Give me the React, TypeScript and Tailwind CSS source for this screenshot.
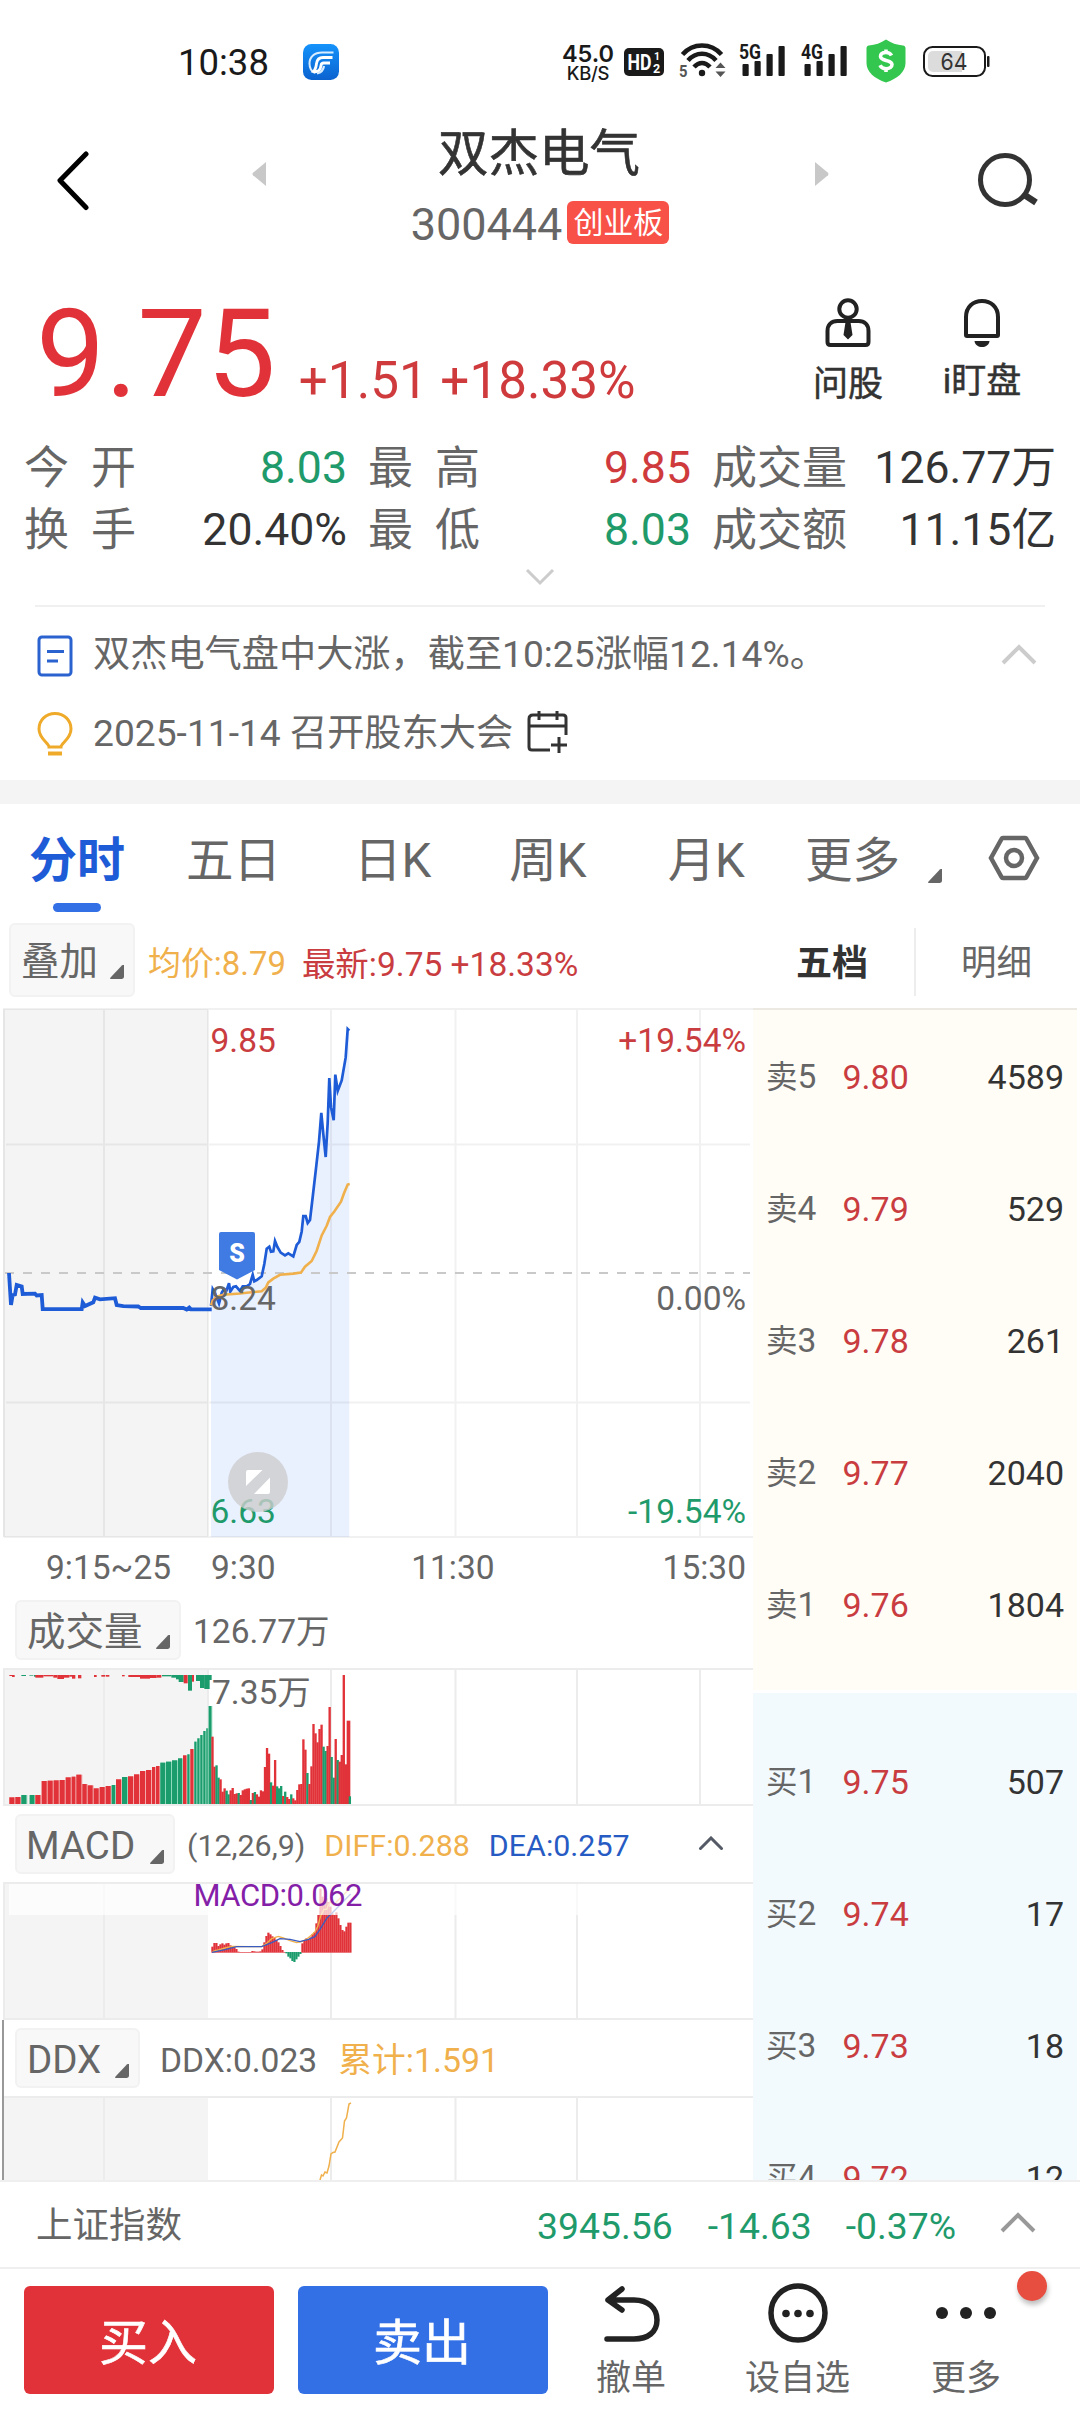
import React from 'react';

type BarRow = [x: number, top: number, color: 'r' | 'g'];

const RED = '#e03238';
const GREEN = '#1b9c6d';
const BLUE = '#1e5bd6';
const ORANGE = '#f0b04c';
const GRID = '#ececec';

// call auction volume, x / top in thirds of a pixel
const AUCTION_BARS: BarRow[] = [
    [28, 397, 'r'], [46, 396, 'r'], [64, 390, 'g'], [89, 390, 'g'], [106, 390, 'r'], [125, 348, 'r'], [143, 347, 'r'],
    [161, 346, 'r'], [179, 345, 'r'], [197, 337, 'r'], [215, 335, 'r'], [229, 329, 'r'], [247, 357, 'r'], [263, 361, 'r'],
    [281, 370, 'r'], [299, 366, 'r'], [317, 363, 'r'], [335, 360, 'g'], [348, 343, 'r'], [366, 336, 'g'], [384, 334, 'r'],
    [402, 328, 'r'], [420, 318, 'r'], [438, 315, 'r'], [456, 306, 'r'], [468, 303, 'r'], [481, 293, 'g'], [498, 290, 'g'],
    [516, 286, 'g'], [534, 280, 'g'], [549, 271, 'r'], [562, 268, 'g'], [571, 252, 'r'], [583, 230, 'g'], [592, 220, 'g'],
    [601, 210, 'g'], [610, 198, 'g'], [619, 190, 'g'], [626, 123, 'g'],
];

// unmatched volume hanging from the top edge: x, width, height
const UNMATCHED: [number, number, number, 'r' | 'g'][] = [
    [28, 8, 3, 'r'], [36, 8, 6, 'r'], [64, 14, 3, 'g'], [88, 12, 2, 'g'], [102, 8, 5, 'g'], [106, 24, 8, 'r'], [130, 30, 4, 'r'],
    [160, 12, 8, 'r'], [172, 20, 12, 'r'], [192, 16, 8, 'r'], [208, 8, 5, 'r'], [216, 10, 11, 'r'], [234, 10, 10, 'r'],
    [282, 8, 6, 'r'], [304, 12, 5, 'r'], [318, 10, 5, 'r'], [366, 8, 4, 'r'], [385, 35, 6, 'r'], [420, 30, 11, 'r'],
    [450, 20, 9, 'r'], [470, 14, 8, 'r'], [486, 28, 4, 'g'], [514, 14, 8, 'g'], [528, 10, 13, 'g'], [536, 15, 21, 'g'],
    [551, 12, 25, 'r'], [564, 12, 47, 'g'], [576, 6, 20, 'r'], [588, 12, 18, 'g'], [600, 14, 39, 'g'], [613, 16, 42, 'g'], [626, 9, 15, 'g'],
];

const MINUTE_BARS = (
    'r215 r305 g301 g338 r343 r380 r370 g377 g388 r376 r369 r387 r385 g384 r390 r376 r373 r371 r370 g405 r384 g381 r388 ' +
    'r395 r376 r379 r306 r249 r266 g352 r362 r285 g364 g370 g363 r393 g380 r396 r402 g388 r400 r406 r375 r358 r357 r223 ' +
    'r254 g324 r357 r304 r177 r205 r232 r192 r179 g245 g258 r243 r126 g276 g338 r222 g285 r290 r270 r30 r298 r167 g394'
).split(' ');

const MACD_BARS = [
    200, 189, 189, 198, 193, 190, 194, 190, 189, 196, 198, 202, 207, 215, 217, 217, 217, 217, 217, 217, 213, 214, 215, 215,
    214, 208, 187, 168, 158, 163, 169, 174, 180, 187, 198, 210, 217, 222, 232, 237, 245, 248, 240, 232, 224, 190, 180, 175,
    177, 172, 163, 157, 130, 105, 26, 50, 75, 55, 66, 80, 100, 105, 97, 115, 135, 150, 154, 140, 128, 128,
];

const PRE_LINE =
    '9,265 11,297 12.7,287 15,286.5 16.7,277 21.7,278.5 22.7,286 35,285.7 36.7,287.5 41.7,287 42.7,301 81.7,301.2 82.7,294.5 85,298 93.3,294.3 95,289.7 100,291.3 115,290.2 116.7,297 123.3,298.2 138.3,298.5 140.7,300 183.3,300 186.7,301.5 189.3,299.5 191,301.3 211.7,301.3';

const PRICE_LINE =
    '211,298 212.7,281 215,285 219,295.5 221.7,284.8 224,281 226.7,282 229,275.2 230.3,283.6 233.3,279 236,278.3 240,282.9 242.7,278.3 246.7,278.3 250,276 252.7,266.8 254.3,273.3 256.7,272 261.7,268.3 264.3,256 266.7,240.8 269.3,238.8 271,243.8 273.3,243.4 275,233 277.3,238.8 280.7,244.6 285,247.3 288.3,245.3 293.3,248.4 296.7,237 299.3,233.9 301.7,223.5 303.3,208.2 305.7,208.2 307.7,215 310,212 312.7,189 316,160.4 319,133.6 321.3,104.9 323.3,126 325.7,149 327.7,114.5 329.3,70 331,99.2 333.7,112.2 335.3,66.6 337.7,83 341.7,72.4 345.7,49.4 347.7,21 349.3,22.6';

const AVG_LINE =
    '211,297.4 212.7,292.4 216.7,288.6 223.3,286.7 240,285.5 261.7,283.2 265.7,279.8 268.3,274.4 273.3,270.6 280,266.8 293.3,265.6 301,264.5 305,258.7 311.7,253 316.7,242.7 321.7,227.4 326.7,217.8 330,209 334.3,203.6 341,193.7 344,185.3 347.7,176.5 349.7,176';

const TABS = [
    { label: '五日', cls: 'ml-[60px]' },
    { label: '日K', cls: 'ml-[73px]' },
    { label: '周K', cls: 'ml-[78px]' },
    { label: '月K', cls: 'ml-[81px]' },
    { label: '更多', cls: 'ml-[60px]' },
];

const SELLS = [
    ['卖5', '9.80', '4589'],
    ['卖4', '9.79', '529'],
    ['卖3', '9.78', '261'],
    ['卖2', '9.77', '2040'],
    ['卖1', '9.76', '1804'],
];

const BUYS = [
    ['买1', '9.75', '507'],
    ['买2', '9.74', '17'],
    ['买3', '9.73', '18'],
    ['买4', '9.72', '12'],
];

const fillOf = (c: string) => (c === 'r' ? RED : GREEN);

const Signal = ({ label }: { label: string }) => (
    <svg width="48" height="36" viewBox="0 0 48 36" className="overflow-visible">
        <text x="0" y="15.5" fontSize="20" fontWeight="700" fontFamily="Roboto" textLength="22" lengthAdjust="spacingAndGlyphs" fill="#1a1a1a">{label}</text>
        <rect x="3.5" y="21" width="6.2" height="12" rx="1" fill="#1a1a1a" />
        <rect x="15.5" y="18" width="6.2" height="15" rx="1" fill="#1a1a1a" />
        <rect x="27.5" y="11" width="6.2" height="22" rx="1" fill="#1a1a1a" />
        <rect x="39.5" y="3" width="6.2" height="30" rx="1" fill="#1a1a1a" />
    </svg>
);

const StatusBar = () => (
    <div className="h-[110px] flex items-start pt-[36px] pl-[178px] pr-[89px] text-[#1a1a1a]">
        <div className="flex items-center h-[54px] w-[91px]">
            <span className="text-[36.5px] leading-none">10:38</span>
        </div>
        <svg className="ml-[34px] mt-[8px]" width="36" height="36" viewBox="0 0 36 36">
            <defs>
                <linearGradient id="app" x1="0" y1="0" x2="0" y2="1">
                    <stop offset="0" stopColor="#1593fb" />
                    <stop offset="1" stopColor="#0b62cf" />
                </linearGradient>
            </defs>
            <rect width="36" height="36" rx="8.5" fill="url(#app)" />
            <path d="M30.500 8.500H19C11.500 8.500 6.500 13 6.500 19.500c0 4.500 2 8 5.500 9.500" fill="none" stroke="#d8ecff" strokeWidth="2" />
            <path d="M29.500 13.500H20c-4.500 0-6 2.500-6.500 6-.4 3.500-1 6-3 8 4.500 1 7-1.500 7.500-6 .2-1.700 1-2.500 2.800-2.500H27" fill="none" stroke="#fff" strokeWidth="2.800" />
            <path d="M21 22c-.5 3.500-2.500 6.500-7 7.500" fill="none" stroke="#d8ecff" strokeWidth="2.200" />
        </svg>
        <div className="flex-1" />
        <div className="flex flex-col items-center font-['Inter'] w-[52px] mt-[7px] mr-[2px]">
            <span className="text-[23.5px] leading-[21px] font-semibold">45.0</span>
            <span className="text-[18.5px] leading-[18px] font-medium tracking-[-0.3px]">KB/S</span>
        </div>
        <svg className="ml-[8px] mt-[12px] overflow-visible" width="40" height="28" viewBox="0 0 40 28">
            <rect width="40" height="28" rx="5" fill="#1a1a1a" />
            <text x="3.5" y="22" fontSize="22" fontWeight="700" fontFamily="Roboto" textLength="24" lengthAdjust="spacingAndGlyphs" fill="#fff">HD</text>
            <text x="30" y="11.500" fontSize="10.500" fontWeight="700" fontFamily="Roboto" fill="#fff">1</text>
            <text x="29" y="25" fontSize="12.500" fontWeight="700" fontFamily="Roboto" fill="#fff">2</text>
        </svg>
        <svg className="ml-[15px] mt-[6px] overflow-visible" width="48" height="36" viewBox="0 0 48 36">
            <g fill="none" stroke="#1a1a1a" strokeWidth="4.500">
                <path d="M3.500 12.500C14 .5 32 .5 42.500 12.500" />
                <path d="M9 18.500c8-9 20-9 28 0" />
                <path d="M15 25c5-5.500 11-5.500 16 0" />
            </g>
            <circle cx="23" cy="31" r="3.200" fill="#1a1a1a" />
            <text x="0" y="35" fontSize="17" fontWeight="700" fontFamily="Roboto" textLength="8.500" lengthAdjust="spacingAndGlyphs" fill="#555">5</text>
            <path d="M41.500 20.500l5 5.500h-10zM41.500 35l5-5.500h-10z" fill="#555" />
        </svg>
        <div className="ml-[12px] mt-[7px]"><Signal label="5G" /></div>
        <div className="ml-[14px] mt-[7px]"><Signal label="4G" /></div>
        <svg className="ml-[16px] mt-[3px]" width="42" height="44" viewBox="0 0 42 44">
            <path d="M21 .5c5 3.500 11 5.500 17 6 1.800.2 2.500 1.200 2.500 3V24c0 9-8 15.500-19.500 19.500C9.500 39.500 1.500 33 1.500 24V9.500c0-1.800.7-2.800 2.500-3 6-.5 12-2.500 17-6z" fill="#34c74f" />
            <path d="M26.500 16.500c-1-2-3-3-5.500-3-3.500 0-5.500 1.600-5.500 4 0 5 11.500 2.800 11.500 8 0 2.500-2.500 4.200-6 4.200-3 0-5-1.200-6-3.400M21 10.500v3M21 29.500v3.500" fill="none" stroke="#fff" strokeWidth="3.600" />
        </svg>
        <svg className="ml-[16px] mt-[10px] overflow-visible" width="68" height="32" viewBox="0 0 68 32">
            <rect x="1" y="1" width="61" height="29" rx="8.500" fill="#fff" stroke="#1a1a1a" strokeWidth="2" />
            <path d="M10 5h29v21H10a5 5 0 0 1-5-5V10a5 5 0 0 1 5-5z" fill="#dcdcdc" />
            <rect x="64" y="10" width="2.500" height="11" rx="1" fill="#1a1a1a" />
            <text x="17.500" y="23.700" fontSize="23" fontFamily="Inter" textLength="27" lengthAdjust="spacingAndGlyphs" fill="#333">64</text>
        </svg>
    </div>
);

const Header = () => (
    <header className="h-[160px] flex items-start justify-between pl-[56px] pr-[40px]">
        <div className="flex w-[214px] justify-between">
            <svg className="mt-[41px]" width="36" height="60" viewBox="0 0 36 60">
                <path d="M30 3L4 29.500 30 56.500" fill="none" stroke="#000" strokeWidth="5" strokeLinecap="round" strokeLinejoin="round" />
            </svg>
            <svg className="mt-[52px] mr-[4px]" width="14" height="24" viewBox="0 0 14 24">
                <path d="M14 0v24L1 13.200q-1-1.200 0-2.400z" fill="#c8c8c8" />
            </svg>
        </div>
        <div className="flex flex-col items-center pt-[17px]">
            <h1 className="text-[50.5px] leading-[54px] text-[#333] [-webkit-text-stroke:0.6px_#333]">双杰电气</h1>
            <div className="flex items-center mt-[22px] pl-[2px]">
                <span className="text-[45px] leading-[44px] text-[#666]">300444</span>
                <span className="ml-[5px] mt-[-5px] h-[43px] w-[102px] rounded-[6px] bg-[#f85148] text-white text-[30px] leading-[43px] text-center">创业板</span>
            </div>
        </div>
        <div className="flex w-[232px] justify-between">
            <svg className="mt-[52px] ml-[7px]" width="14" height="24" viewBox="0 0 14 24">
                <path d="M0 0v24l13-10.800q1-1.200 0-2.400z" fill="#c8c8c8" />
            </svg>
            <svg className="mt-[41px]" width="63" height="60" viewBox="0 0 63 60">
                <circle cx="28" cy="29" r="24.500" fill="none" stroke="#333" strokeWidth="5" />
                <path d="M46 43l13 8.500" stroke="#333" strokeWidth="6.500" />
            </svg>
        </div>
    </header>
);

const Quote = () => (
    <section className="h-[170px] flex items-start pl-[36px]">
        <span className="text-[123px] leading-[144px] mt-[12px] text-[#e03238]">9.75</span>
        <span className="ml-[23px] mt-[81px] text-[51.2px] leading-[60px] text-[#cf3a3d]">+1.51 +18.33%</span>
        <div className="ml-auto mr-[134px] w-0 flex flex-col items-center mt-[27px]">
            <svg width="48" height="52" viewBox="0 0 48 52" className="shrink-0">
                <circle cx="24" cy="12" r="8.700" fill="none" stroke="#222" strokeWidth="4" />
                <path d="M3.500 45V34c0-6 4-10 10-10h21c6 0 10 4 10 10v11q0 3-3 3h-35q-3 0-3-3z" fill="none" stroke="#222" strokeWidth="4" />
                <path d="M21.500 25h5l2 13-4.500 4.500-4.500-4.500z" fill="#222" />
            </svg>
            <span className="mt-[18px] text-[35px] leading-[36px] text-[#333] whitespace-nowrap [-webkit-text-stroke:0.5px_#333]">问股</span>
        </div>
        <div className="mr-[98px] w-0 flex flex-col items-center mt-[27px]">
            <svg width="40" height="52" viewBox="0 0 40 52" className="shrink-0">
                <path d="M4 38V20C4 10 11 4 20 4s16 6 16 16v18q0 1-1 1H5q-1 0-1-1z" fill="none" stroke="#222" strokeWidth="4" />
                <path d="M12.500 44h15c-1 8-14 8-15 0z" fill="#222" />
            </svg>
            <span className="mt-[15px] text-[35px] leading-[36px] text-[#333] whitespace-nowrap [-webkit-text-stroke:0.5px_#333]">i盯盘</span>
        </div>
    </section>
);

const Stat = ({ label, value, tone, wide }: { label: string; value: string; tone: string; wide?: boolean }) => (
    <div className="flex justify-between">
        <span className={`text-[#666] flex ${wide ? '' : 'gap-[22px]'}`}>
            {label.split('').map((ch) => <span key={ch}>{ch}</span>)}
        </span>
        <span className={`text-[44.6px] ${tone}`}>{value}</span>
    </div>
);

const Stats = () => (
    <section className="h-[165px] flow-root pl-[24px] pr-[24px]">
        <div className="grid -mt-[2px] grid-cols-[323px_323px_344px] gap-x-[21px] text-[45px] leading-[61.500px] text-[#333]">
            <Stat label="今开" value="8.03" tone="text-[#1f9a6b]" />
            <Stat label="最高" value="9.85" tone="text-[#cf3a3d]" />
            <Stat label="成交量" value="126.77万" tone="" wide />
            <Stat label="换手" value="20.40%" tone="" />
            <Stat label="最低" value="8.03" tone="text-[#1f9a6b]" />
            <Stat label="成交额" value="11.15亿" tone="" wide />
        </div>
        <svg className="mx-auto mt-[7px]" width="30" height="18" viewBox="0 0 30 18">
            <path d="M2 2l13 13L28 2" fill="none" stroke="#ccc" strokeWidth="3" />
        </svg>
    </section>
);

const News = () => (
    <section className="mx-[35px] h-[175px] border-t-2 border-[#f0f0f0]">
        <div className="flex items-center h-[78px] mt-[10px]">
            <svg className="ml-[1px]" width="38" height="42" viewBox="0 0 38 42">
                <rect x="3" y="2" width="32" height="38" rx="3" fill="none" stroke="#2a62d0" strokeWidth="3" />
                <path d="M11 16.500h17M11 26h11" stroke="#2a62d0" strokeWidth="3" />
            </svg>
            <span className="ml-[19px] text-[37.200px] leading-none text-[#666] -mt-[2px]">双杰电气盘中大涨，截至10:25涨幅12.14%。</span>
            <svg className="ml-auto mr-[7px] -mt-[4px]" width="38" height="22" viewBox="0 0 38 22">
                <path d="M3 20L19 4l16 16" fill="none" stroke="#ccc" strokeWidth="4" />
            </svg>
        </div>
        <div className="flex items-center h-[78px]">
            <svg className="ml-[1px] -mt-[1px]" width="38" height="46" viewBox="0 0 38 46">
                <path d="M13 36c0-4-10-8-10-18C3 9 10 2.500 19 2.500S35 9 35 18c0 10-10 14-10 18z" fill="none" stroke="#eeaa28" strokeWidth="3" />
                <path d="M12 42.500h14" stroke="#eeaa28" strokeWidth="4" />
            </svg>
            <span className="ml-[19px] text-[37.200px] leading-none text-[#666] -mt-[1px]">2025-11-14 召开股东大会</span>
            <svg className="ml-[14px] -mt-[5px]" width="42" height="44" viewBox="0 0 42 44">
                <path d="M23 40H5q-3 0-3-3V9q0-4 4-4h30q3 0 3 3v17M2 16h37M12 1v9M30 1v9M32 27v16M24 35h16" fill="none" stroke="#333" strokeWidth="3" />
            </svg>
        </div>
    </section>
);

const Corner = ({ className }: { className: string }) => (
    <svg className={className} width="14" height="14" viewBox="0 0 13 13">
        <path d="M13 0v11q0 2-2 2H1q-1.500 0-.5-1.500L11 .5q2-1.500 2-.5z" fill="#666" />
    </svg>
);

const Tabs = () => (
    <nav className="h-[112px] flex items-start pt-[31px] text-[47.500px] leading-[52px] text-[#666]">
        <div className="ml-[29px] mr-[1px] flex w-[96px] flex-col items-center">
            <span className="text-[48px] font-bold text-[#1e5bd6]">分时</span>
            <span className="mt-[16px] h-[9px] w-[48px] rounded-full bg-[#3370e6]" />
        </div>
        {TABS.map((tab) => (
            <span key={tab.label} className={tab.cls}>{tab.label}</span>
        ))}
        <Corner className="ml-[28px] mt-[34px]" />
        <svg className="ml-[46px]" width="52" height="46" viewBox="0 0 52 46">
            <path d="M15 3h22q1 0 1.500 1L49 23 38.500 42q-.5 1-1.500 1H15q-1 0-1.500-1L3 23 13.500 4q.5-1 1.500-1z" fill="none" stroke="#666" strokeWidth="4.500" />
            <circle cx="26" cy="23" r="8" fill="none" stroke="#666" strokeWidth="4.500" />
        </svg>
    </nav>
);

const IndicatorButton = ({ label, className }: { label: string; className: string }) => (
    <button className={`flex items-center justify-between rounded-[6px] border-2 border-[#f2f2f2] bg-[#f8f8f8] text-[38.500px] leading-none text-[#666] ${className}`}>
        <span className="mt-[4px] whitespace-nowrap">{label}</span>
        <Corner className="mt-[24px] shrink-0" />
    </button>
);

const MinuteChart = () => (
    <svg width="753" height="532" viewBox="0 0 753 532" className="block font-['Roboto']" fontSize="33.5">
        <rect x="3" y="1" width="205" height="528" fill="#f4f4f4" />
        <path d={`M211,529 L${PRICE_LINE.split(' ').join(' L')} V529z`} fill="#e9f0fe" />
        <path d="M3 1H753M6 136.500H750M6 394.500H750M4 529H753M4 1V529M104 1V529M208 1V529M331 1V529M455.500 1V529M577 1V529M700 1V529" stroke="#000" strokeOpacity=".055" strokeWidth="2" />
        <path d="M5 265H750" stroke="#c9c9c9" strokeWidth="2" strokeDasharray="9 9" />
        <polyline points={PRE_LINE} fill="none" stroke={BLUE} strokeWidth="3.800" />
        <polyline points={PRICE_LINE} fill="none" stroke={BLUE} strokeWidth="2.700" />
        <polyline points={AVG_LINE} fill="none" stroke={ORANGE} strokeWidth="2.600" />
        <path d="M221 224h32q2 0 2 2v36l-18 9.500L219 262v-36q0-2 2-2z" fill="#3f7be2" />
        <text x="237" y="253.500" fontSize="25" fontWeight="900" fill="#fff" textAnchor="middle">S</text>
        <text x="210.500" y="44" fill="#c93c40">9.85</text>
        <text x="210.500" y="302" fill="#666">8.24</text>
        <text x="210.500" y="515" fill="#1f9a6b">6.63</text>
        <text x="746" y="44" fill="#c93c40" textAnchor="end">+19.54%</text>
        <text x="746" y="302" fill="#666" textAnchor="end">0.00%</text>
        <text x="746" y="515" fill="#1f9a6b" textAnchor="end">-19.54%</text>
        <circle cx="258" cy="474" r="30" fill="#cdcdcd" fillOpacity=".8" />
        <path d="M248 462h14.500L246 478v-14q0-2 2-2zM270 469.500V484q0 2-2 2h-14z" fill="#fff" />
    </svg>
);

const VolumeChart = () => (
    <svg width="753" height="138" viewBox="0 0 753 138" className="block overflow-visible font-['Roboto','Noto_Sans_CJK_SC',sans-serif]">
        <rect x="3" y="1" width="205" height="136" fill="#f4f4f4" />
        <path d="M3 1H753M3 137H753M4 1V137M104 1V137M208 1V137M331 1V137M455.500 1V137M577 1V137M700 1V137" stroke={GRID} strokeWidth="2" />
        <g transform="scale(0.33333) translate(0 -9)">
            {AUCTION_BARS.map(([x, top, c], i) => {
                const next = AUCTION_BARS[i + 1]?.[0] ?? 637;
                const w = Math.min(next - x, 18) - 3;
                return (
                    <g key={x}>
                        <rect x={x} y={top} width={w + 3} height={417 - top} fill={c === 'r' ? '#f3a9a9' : '#8fd9bb'} />
                        <rect x={x} y={top} width={w} height={417 - top} fill={fillOf(c)} />
                    </g>
                );
            })}
            {UNMATCHED.map(([x, w, h, c]) => (
                <rect key={x} x={x} y={30} width={w} height={h} fill={fillOf(c)} />
            ))}
            {MINUTE_BARS.map((bar, i) => {
                const top = Number(bar.slice(1));
                return <rect key={i} x={634 + i * 6.06} y={top} width={i === 67 ? 11 : 7} height={417 - top} fill={fillOf(bar[0])} />;
            })}
        </g>
        <text x="212" y="36" fontSize="33.500" fill="#666">7.35万</text>
    </svg>
);

const MacdChart = () => (
    <svg width="753" height="138" viewBox="0 0 753 138" className="block overflow-visible font-['Roboto']">
        <rect x="3" y="1" width="205" height="136" fill="#f4f4f4" />
        <path d="M3 1H753M3 137H753M4 1V137M104 1V137M331 1V137M455.500 1V137M577 1V137" stroke={GRID} strokeWidth="2" />
        <g transform="scale(0.33333) translate(600 -6)">
            {MACD_BARS.map((v, i) => (
                <rect key={i} x={34 + i * 6} y={Math.min(v, 216)} width="6.600" height={Math.max(Math.abs(218 - v), 2)} fill={v > 217 ? GREEN : RED} />
            ))}
            <polyline points="36,217 45,212 55,210 75,204 95,199 150,200 185,200 200,190 215,176 235,169 250,174 270,182 290,188 305,185 320,177 335,165 345,155 353,140 362,108 372,88 380,88 390,65 400,75 415,60 445,30" fill="none" stroke={ORANGE} strokeWidth="4" />
            <polyline points="36,217 75,209 110,200 185,200 215,188 240,176 270,178 300,185 325,178 345,170 360,148 380,115 400,95 425,70 452,42" fill="none" stroke="#3a5bc0" strokeWidth="4" />
        </g>
        <rect x="9" y="2" width="690" height="31" fill="#fff" fillOpacity=".7" />
        <text x="193.500" y="23.500" fontSize="31" textLength="169" fill="#8420a8">MACD:0.062</text>
    </svg>
);

const DdxChart = () => (
    <svg width="753" height="84" viewBox="0 0 753 84" className="block">
        <rect x="4" y="1" width="204" height="83" fill="#f4f4f4" />
        <path d="M4 1H753M104 1V84M331 1V84M455.500 1V84M577 1V84" stroke={GRID} strokeWidth="2" />
        <polyline points="320,84 321.500,79 323,80 325,76 327,77 329,70 331,58 333,56.500 335,56 339,46 342.500,42 344.500,25 346.500,22 349,8 351,7" fill="none" stroke={ORANGE} strokeWidth="1.500" />
    </svg>
);

const Charts = () => (
    <div className="w-[753px]">
        <MinuteChart />
        <div className="flex h-[52px] items-center pt-[3px] text-[33.500px] leading-none text-[#666]">
            <span className="ml-[46px]">9:15~25</span>
            <span className="ml-[40px]">9:30</span>
            <span className="ml-auto mr-[168px]">11:30</span>
            <span className="mr-[7px]">15:30</span>
        </div>
        <div className="flex items-center h-[76px]">
            <IndicatorButton label="成交量" className="ml-[15px] h-[60px] w-[166px] pl-[10px] pr-[9px]" />
            <span className="ml-[12px] mt-[4px] text-[33.500px] leading-none text-[#666]">126.77万</span>
        </div>
        <VolumeChart />
        <div className="flex items-center h-[76px] text-[30.400px] leading-none">
            <IndicatorButton label="MACD" className="ml-[15px] h-[60px] w-[160px] pl-[9px] pr-[9px] pt-[1px]" />
            <span className="ml-[12px] mt-[5px] text-[#666]">(12,26,9)</span>
            <span className="ml-[19px] mt-[5px] text-[#f0b04c]">DIFF:0.288</span>
            <span className="ml-[19px] mt-[5px] text-[#275bc4]">DEA:0.257</span>
            <svg className="ml-auto mr-[29px]" width="26" height="16" viewBox="0 0 26 16">
                <path d="M2.500 12.500L13 2l10.500 10.500" fill="none" stroke="#555b66" strokeWidth="3" strokeLinecap="round" />
            </svg>
        </div>
        <MacdChart />
        <div className="flex items-center h-[76px] border-l-2 border-[#999] ml-[2px] leading-none">
            <IndicatorButton label="DDX" className="ml-[11px] h-[60px] w-[125px] pl-[10px] pr-[9px] pt-[1px]" />
            <span className="ml-[20px] mt-[5px] text-[33.600px] text-[#666]">DDX:0.023</span>
            <span className="ml-[21px] mt-[5px] text-[33.800px] text-[#f0b04c]">累计:1.591</span>
        </div>
        <div className="border-l-2 border-[#999] ml-[2px] -mr-[4px]">
            <div className="-ml-[4px]"><DdxChart /></div>
        </div>
    </div>
);

const BookRows = ({ rows }: { rows: string[][] }) => (
    <>
        {rows.map(([side, price, count]) => (
            <div key={side} className="flex h-[132px] items-center pt-px pl-[13px] pr-[13px] text-[34px] leading-none">
                <span className="w-[76.500px] text-[31.500px] text-[#666]">{side.charAt(0)}<span className="text-[33.500px]">{side.charAt(1)}</span></span>
                <span className="text-[#c93c40]">{price}</span>
                <span className="ml-auto text-[#333]">{count}</span>
            </div>
        ))}
    </>
);

const OrderBook = () => (
    <div className="w-[324px]">
        <div className="h-[682px] border-t-2 border-[#ebe9e2] bg-[#fffdf6]">
            <BookRows rows={SELLS} />
        </div>
        <div className="mt-[3px] h-[600px] bg-[#f2fafd] pt-[22px]">
            <BookRows rows={BUYS} />
        </div>
    </div>
);

const BottomBar = () => (
    <footer>
        <div className="flex h-[87px] items-center border-t-2 border-[#efefef] pt-[4px] pl-[36px] pr-[43px] text-[37.300px] leading-none text-[#1f9a6b]">
            <span className="mr-auto text-[36.500px] text-[#666]">上证指数</span>
            <span>3945.56</span>
            <span className="ml-[35px]">-14.63</span>
            <span className="ml-[34px]">-0.37%</span>
            <svg className="ml-[43px] -mt-[9px]" width="38" height="22" viewBox="0 0 38 22">
                <path d="M3 20L19 4l16 16" fill="none" stroke="#999" strokeWidth="4" />
            </svg>
        </div>
        <div className="relative flex h-[145px] items-start border-t-2 border-[#efefef] pt-[17px] text-[35px] leading-[36px] text-[#666]">
            <button className="ml-[24px] h-[108px] w-[250px] rounded-[6px] bg-[#e03238] pt-[6px] pr-[2px] text-[49px] leading-none text-white [-webkit-text-stroke:0.6px_#fff]">买入</button>
            <button className="ml-[24px] h-[108px] w-[250px] rounded-[6px] bg-[#3370e6] pt-[6px] pr-[2px] text-[49px] leading-none text-white [-webkit-text-stroke:0.6px_#fff]">卖出</button>
            <div className="ml-[48px] flex flex-col items-center">
                <svg width="64" height="60" viewBox="0 0 64 60">
                    <path d="M23 3L9 14l14 10M9 14h26c14 0 23 8 23 20s-9 19-23 19H8" fill="none" stroke="#222" strokeWidth="5.500" strokeLinejoin="round" strokeLinecap="round" />
                </svg>
                <span className="mt-[15px]">撤单</span>
            </div>
            <div className="ml-[79px] flex flex-col items-center">
                <svg width="62" height="60" viewBox="0 0 62 60" className="overflow-visible">
                    <circle cx="31" cy="27" r="27" fill="none" stroke="#222" strokeWidth="5.500" />
                    <circle cx="19" cy="27.500" r="3.800" fill="#222" />
                    <circle cx="31" cy="27.500" r="3.800" fill="#222" />
                    <circle cx="43" cy="27.500" r="3.800" fill="#222" />
                </svg>
                <span className="mt-[15px]">设自选</span>
            </div>
            <div className="ml-[81px] flex flex-col items-center">
                <svg width="64" height="60" viewBox="0 0 64 60">
                    <circle cx="8" cy="27" r="6" fill="#222" />
                    <circle cx="32" cy="27" r="6" fill="#222" />
                    <circle cx="56" cy="27" r="6" fill="#222" />
                </svg>
                <span className="mt-[15px]">更多</span>
            </div>
            <span className="absolute left-[1017px] top-[2px] h-[30px] w-[30px] rounded-full bg-[#e84e40] shadow-[1px_4px_5px_rgba(0,0,0,0.25)]" />
        </div>
    </footer>
);

const App: React.FC = () => {
    return (
        <div className="w-[1080px] h-[2412px] overflow-hidden bg-white font-['Roboto','Noto_Sans_CJK_SC',sans-serif]">
            <StatusBar />
            <Header />
            <Quote />
            <Stats />
            <News />
            <div className="h-[24px] bg-[#f4f4f4]" />
            <Tabs />
            <div className="flex h-[92px] items-center leading-none">
                <IndicatorButton label="叠加" className="ml-[9px] -mt-[4px] h-[74px] w-[126px] pl-[10px] pr-[9px]" />
                <span className="ml-[13px] mt-[5px] text-[32.900px] text-[#f0b04c]">均价:8.79</span>
                <span className="ml-[16px] mt-[5px] text-[33.500px] text-[#c93c40]">最新:9.75 +18.33%</span>
                <div className="ml-auto flex h-[68px] w-[120px] items-center border-r-2 border-[#ededed]">
                    <span className="mt-[4px] text-[36px] font-bold text-[#333]">五档</span>
                </div>
                <span className="ml-[45px] mr-[48px] mt-[4px] text-[35.500px] text-[#666]">明细</span>
            </div>
            <div className="flex h-[1172px] overflow-hidden">
                <Charts />
                <OrderBook />
            </div>
            <BottomBar />
        </div>
    );
};

export default App;
